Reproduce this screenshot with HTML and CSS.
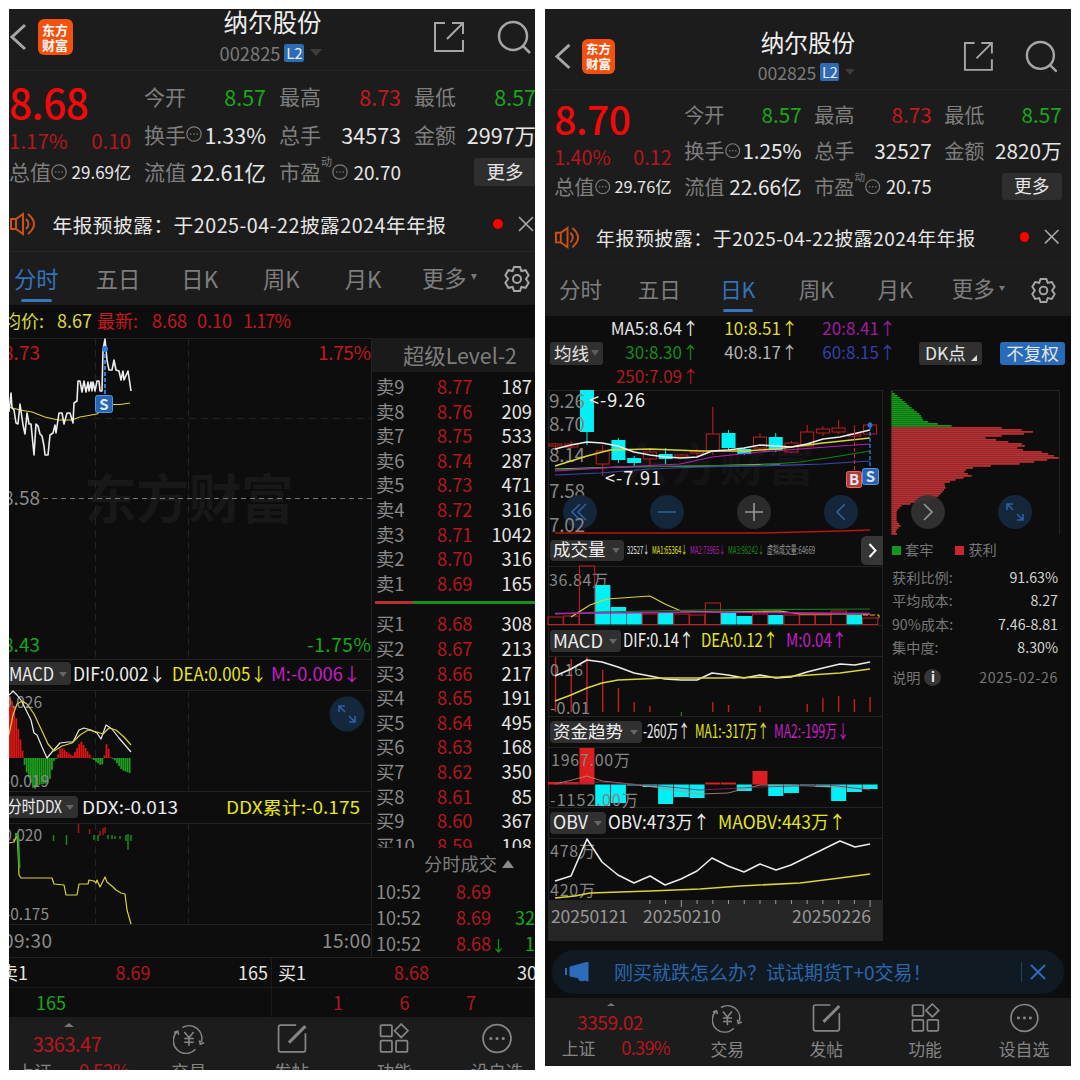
FILE: index.html
```html
<!DOCTYPE html>
<html lang="zh-CN">
  <head>
    <meta charset="UTF-8" />
    <meta name="viewport" content="width=device-width, initial-scale=1.0" />
    <title>纳尔股份 002825</title>
    <link rel="stylesheet" href="styles.css">
  </head>

  <body>
    <!-- 公共图标 -->
    <svg class="defs" width="0" height="0">
      <symbol id="i-back" viewBox="0 0 18 30"><path d="M16 3 3 15l13 12" /></symbol>
      <symbol id="i-share" viewBox="0 0 32 32"><path d="M12 2H2v28h28V19M19 2h11v11M30 2 14 18" /></symbol>
      <symbol id="i-search" viewBox="0 0 34 34"><circle cx="16" cy="16" r="14" /><path d="m26 26 7 7" /></symbol>
      <symbol id="i-horn" viewBox="0 0 26 24"><path d="M1 7h5l7-5v20l-7-5H1zM6 7v10M16 7q5 5 0 10M18 2q12 10 0 20" /></symbol>
      <symbol id="i-close" viewBox="0 0 16 16"><path d="m1 1 14 14M15 1 1 15" /></symbol>
      <symbol id="i-gear" viewBox="0 0 28 28"><path d="M11 2h6l1.400 4 4.200-.8 3 5L23 14l2.600 3.800-3 5-4.200-.8L17 26h-6l-1.400-4-4.200.8-3-5L5 14l-2.600-3.800 3-5 4.200.8z" /><circle cx="14" cy="14" r="4" /></symbol>
      <symbol id="i-trade" viewBox="0 0 34 32"><path d="M10 4.500A13.500 13.500 0 0 1 30 20M24 27.500A13.500 13.500 0 0 1 4 9M1 9.500l4-1.500 1 4M33 20.500l-4 1.500-1-4M12 9l5 6 5-6M17 15v9M12 16h10M12 20h10" /></symbol>
      <symbol id="i-post" viewBox="0 0 30 30"><path d="M19 2H4q-2 0-2 2v22q0 2 2 2h22q2 0 2-2V10" /><path class="pen" d="M12 19 28 3" /></symbol>
      <symbol id="i-func" viewBox="0 0 30 30"><rect x="2" y="2" width="11" height="11" rx="1" /><path d="m22 1 6.500 6.500L22 14l-6.500-6.500z" /><rect x="2" y="17" width="11" height="11" rx="1" /><rect x="17" y="17" width="11" height="11" rx="1" /></symbol>
      <symbol id="i-dots" viewBox="0 0 30 30"><circle cx="15" cy="15" r="13.500" /><path class="dots" d="M9 15h.1M15 15h.1M21 15h.1" /></symbol>
      <symbol id="i-expand" viewBox="-18 -18 36 36"><path d="M-8-2v-6h6M-8-8l6 6M8 2v6H2M8 8 2 2" /></symbol>
    </svg>

    <div class="phone phone-left">
      <div class="top">
        <header class="header">
          <div class="header-side">
            <svg class="icon back"><use href="#i-back" /></svg>
            <div class="logo">东方<br />财富</div>
          </div>
          <div class="title">
            <h1>纳尔股份</h1>
            <p>002825<b>L2</b><i class="tri"></i></p>
          </div>
          <div class="header-side right">
            <svg class="icon share"><use href="#i-share" /></svg>
            <svg class="icon search"><use href="#i-search" /></svg>
          </div>
        </header>
        <section class="quote">
          <div class="price">8.68</div>
          <div><label>今开</label><span class="green">8.57</span></div>
          <div><label>最高</label><span class="red">8.73</span></div>
          <div><label>最低</label><span class="green">8.57</span></div>
          <div class="change"><span>1.17%</span><span>0.10</span></div>
          <div><label>换手<svg class="tip"><use href="#i-dots" /></svg></label><span>1.33%</span></div>
          <div><label>总手</label><span>34573</span></div>
          <div><label>金额</label><span>2997万</span></div>
          <div><label>总值<svg class="tip"><use href="#i-dots" /></svg></label><span class="sm">29.69亿</span></div>
          <div><label>流值</label><span>22.61亿</span></div>
          <div><label>市盈<sup>动</sup><svg class="tip"><use href="#i-dots" /></svg></label><span class="md">20.70</span></div>
          <div class="end"><span class="more">更多</span></div>
        </section>
        <section class="notice">
          <svg class="icon horn"><use href="#i-horn" /></svg>
          <p>年报预披露：于2025-04-22披露2024年年报</p>
          <i class="dot"></i>
          <svg class="icon close"><use href="#i-close" /></svg>
        </section>
        <nav class="tabs">
          <span class="active">分时</span><span>五日</span><span>日K</span><span>周K</span><span>月K</span>
          <span class="tab-more">更多<i class="tri"></i></span>
          <svg class="icon gear"><use href="#i-gear" /></svg>
        </nav>
      </div>

      <div class="minute">
        <svg class="chart" width="363" height="653" viewBox="9 305 363 653">
          <text class="mark" x="84" y="519" font-size="53" textLength="210">东方财富</text>
          <g class="line-grid">
            <path d="M9 338.500h363M9 659.500h363M9 690.500h363M9 791.500h363M9 823.500h363M9 924.500h363M9 957.500h363M371.500 338v620" />
            <path class="dash" d="M95.500 338v321M188.500 338v321M95.500 690v101M188.500 690v101M95.500 823v101M188.500 823v101M9 418.500h363" />
          </g>
          <path class="mid" d="M43 498.500h329" />
          <g font-size="18" fill="#d9d94c">
            <text x="3" y="328">均价:</text>
            <text x="57" y="328" textLength="35">8.67</text>
          </g>
          <g font-size="18" fill="#c3181d">
            <text x="97" y="328">最新:</text>
            <text x="152" y="328" textLength="35">8.68</text>
            <text x="197" y="328" textLength="35">0.10</text>
            <text x="243" y="328" textLength="48">1.17%</text>
          </g>
          <g font-size="19" text-anchor="end">
            <text x="40" y="360" class="red">8.73</text>
            <text x="371" y="360" class="red" textLength="53">1.75%</text>
            <text x="40" y="505" fill="#8c8c8c">8.58</text>
            <text x="40" y="652" class="green">8.43</text>
            <text x="371" y="652" class="green" textLength="64">-1.75%</text>
            <text x="52" y="948" fill="#8c8c8c" textLength="49">09:30</text>
            <text x="371" y="948" fill="#8c8c8c" textLength="49">15:00</text>
          </g>
          <polyline class="l yellow" points="9,407 20,410 32,412 45,417 58,420 72,420 80,417 97,414 104,407 111,404.500 120,404.500 130,403" />
          <polyline class="l white w15" points="9,412 11,393 12,408 14,410 16,423 18,424 20,404 23,425 25,434 27,413 29,424 31,424 34,455 36,424 38,426 40,434 42,436 44,446 45,455 48,455 50,435 53,433 55,425 56,433 59,413 62,413 64,424 67,413 70,413 73,423 74,403 77,401 78,381 80,381 82,392 84,381 86,392 88,382 89,391 91,382 92,391 93,382 95,391 97,381 99,381 100,391 102,391 103,350 105,339 107,360 109,370 112,370 114,360 116,370 119,371 121,380 123,371 124,380 128,371 131,391" />
          <path d="M105 348v48" stroke="#2f7be0" stroke-width="2" stroke-dasharray="4 2" />
          <circle cx="105" cy="349" r="3" fill="#2f7be0" />
          <rect class="tag-s" x="95.500" y="395.500" width="17" height="17" rx="2" />
          <text x="104" y="410" class="tag">S</text>

          <!-- MACD -->
          <rect class="chip" x="0" y="662" width="71" height="23" rx="4" />
          <path class="arrow" d="M59 672h8l-4 5z" />
          <g font-size="18">
            <text x="9" y="681" fill="#eee" textLength="45" lengthAdjust="spacingAndGlyphs">MACD</text>
            <text x="73" y="681" fill="#eee" textLength="93" lengthAdjust="spacingAndGlyphs">DIF:0.002↓</text>
            <text x="172" y="681" fill="#e6e61e" textLength="95" lengthAdjust="spacingAndGlyphs">DEA:0.005↓</text>
            <text x="271" y="681" fill="#c81ec8" textLength="90" lengthAdjust="spacingAndGlyphs">M:-0.006↓</text>
          </g>
          <g id="minute-macd"></g>
          <g font-size="15.500" fill="#8c8c8c" text-anchor="end">
            <text x="42" y="708">0.026</text>
            <text x="49" y="787">-0.019</text>
            <text x="42" y="841">0.020</text>
            <text x="49" y="920">-0.175</text>
          </g>
          <polyline class="l white" points="9,695 13,691 17,695 21,700 27,712 31,720 34,733 37,735 42,747 47,758 52,752 60,743 68,742 73,742 79,730 84,728 91,730 97,733 101,739 106,725 112,729 119,738 125,745 131,752" />
          <polyline class="l yellow" points="9,735 13,715 17,704 22,701 27,704 34,714 42,731 48,744 54,751 62,746 72,743 80,735 88,730 97,732 103,734 109,728 116,730 124,737 131,745" />
          <circle cx="347" cy="714" r="17.500" fill="#14273c" />
          <use class="blue-ico" href="#i-expand" x="329" y="696" width="36" height="36" />

          <!-- DDX -->
          <rect class="chip" x="0" y="796" width="78" height="22" rx="4" />
          <path class="arrow" d="M66 805h8l-4 5z" />
          <g font-size="17.500">
            <text x="8" y="813" fill="#eee" textLength="54" lengthAdjust="spacingAndGlyphs">分时DDX</text>
            <text x="82" y="814" fill="#eee" textLength="96" lengthAdjust="spacingAndGlyphs">DDX:-0.013</text>
            <text x="226" y="814" fill="#e6e61e" textLength="134" lengthAdjust="spacingAndGlyphs">DDX累计:-0.175</text>
          </g>
          <polyline class="l yellow" points="9,843 14,842 17,835 18,850 19,875 21,878 52,878 54,884 64,885 66,895 77,895 79,884 88,884 89,880 94,881 96,883 97,880 100,887 102,883 105,877 107,882 113,887 116,890 121,893 125,894 127,910 129,917 131,924" />
          <path d="M16 833v4M18 834l1.500 34" stroke="#2ba02b" stroke-width="2" fill="none" />
          <path d="M53.500 835v6M66.500 835v10M94 835v5M98 835v6M108 835v4M112 835v4M115 836v3M120 836v3M126 835v6M128 834v16M131 835v6" stroke="#1c8c1c" stroke-width="1.500" />
          <path d="M78.500 824v9M89.500 829v5M100 831v5M103 828v7M105 827v6" stroke="#a01818" stroke-width="1.500" />
        </svg>

        <aside class="book">
          <h2>超级Level-2</h2>
          <div class="asks" id="asks"></div>
          <div class="ratio"></div>
          <div class="bids" id="bids"></div>
          <div class="deals-title">分时成交<i></i></div>
          <div class="deal"><span>10:52</span><em>8.69</em></div>
          <div class="deal"><span>10:52</span><em>8.69</em><b>32</b></div>
          <div class="deal"><span>10:52</span><em>8.68<u>↓</u></em><b>1</b></div>
        </aside>
      </div>

      <div class="best">
        <div><span class="cut">卖1</span><em>8.69</em><span>165</span></div>
        <div><span>买1</span><em>8.68</em><span class="clip">308</span></div>
        <div class="queue sell"><span>165</span></div>
        <div class="queue buy"><span>1</span><span>6</span><span>7</span></div>
      </div>

      <footer class="bottom">
        <div class="index"><i></i><b>3363.47</b><p>上证<span>0.52%</span></p></div>
        <div><svg class="icon"><use href="#i-trade" /></svg>交易</div>
        <div><svg class="icon"><use href="#i-post" /></svg>发帖</div>
        <div><svg class="icon"><use href="#i-func" /></svg>功能</div>
        <div><svg class="icon"><use href="#i-dots" /></svg>设自选</div>
      </footer>
    </div>

    <div class="phone phone-right">
      <div class="top">
        <header class="header">
          <div class="header-side">
            <svg class="icon back"><use href="#i-back" /></svg>
            <div class="logo">东方<br />财富</div>
          </div>
          <div class="title">
            <h1>纳尔股份</h1>
            <p>002825<b>L2</b><i class="tri"></i></p>
          </div>
          <div class="header-side right">
            <svg class="icon share"><use href="#i-share" /></svg>
            <svg class="icon search"><use href="#i-search" /></svg>
          </div>
        </header>
        <section class="quote">
          <div class="price">8.70</div>
          <div><label>今开</label><span class="green">8.57</span></div>
          <div><label>最高</label><span class="red">8.73</span></div>
          <div><label>最低</label><span class="green">8.57</span></div>
          <div class="change"><span>1.40%</span><span>0.12</span></div>
          <div><label>换手<svg class="tip"><use href="#i-dots" /></svg></label><span>1.25%</span></div>
          <div><label>总手</label><span>32527</span></div>
          <div><label>金额</label><span>2820万</span></div>
          <div><label>总值<svg class="tip"><use href="#i-dots" /></svg></label><span class="sm">29.76亿</span></div>
          <div><label>流值</label><span>22.66亿</span></div>
          <div><label>市盈<sup>动</sup><svg class="tip"><use href="#i-dots" /></svg></label><span class="md">20.75</span></div>
          <div class="end"><span class="more">更多</span></div>
        </section>
        <section class="notice">
          <svg class="icon horn"><use href="#i-horn" /></svg>
          <p>年报预披露：于2025-04-22披露2024年年报</p>
          <i class="dot"></i>
          <svg class="icon close"><use href="#i-close" /></svg>
        </section>
        <nav class="tabs">
          <span>分时</span><span>五日</span><span class="active">日K</span><span>周K</span><span>月K</span>
          <span class="tab-more">更多<i class="tri"></i></span>
          <svg class="icon gear"><use href="#i-gear" /></svg>
        </nav>
      </div>

      <div class="ma">
        <span class="btn ma-type">均线<i class="tri"></i></span>
        <div class="ma-values">
          <span class="c5">MA5:8.64↑</span><span class="c10">10:8.51↑</span><span class="c20">20:8.41↑</span>
          <span class="c30">30:8.30↑</span><span class="c40">40:8.17↑</span><span class="c60">60:8.15↑</span>
          <span class="c250">250:7.09↑</span>
        </div>
        <span class="btn dk">DK点<i></i></span>
        <span class="btn fq">不复权</span>
      </div>

      <div class="daily">
        <svg class="chart" width="339" height="552" viewBox="545 390 339 552">
          <text class="mark mark-dark" x="622" y="481" font-size="46" textLength="192">东方财富</text>
          <path class="line-grid" d="M548 390.500h334M548 566.500h334M548 625.500h334M548 656.500h334M548 716.500h334M548 747.500h334M548 807.500h334M548 838.500h334M548.500 390v550M882.500 390v550" />

          <g id="candles"></g>
          <g font-size="19" fill="#858585">
            <text x="549" y="408" textLength="36">9.26</text>
            <text x="549" y="431" textLength="36">8.70</text>
            <text x="549" y="462" textLength="36">8.14</text>
            <text x="549" y="498" textLength="36">7.58</text>
          </g>
          <polyline class="l blue" points="555,475 600,473 650,469 700,467 760,466 823,464 870,461" />
          <polyline class="l silver" points="555,469 620,467 700,466 780,464" />
          <polyline class="l lime" points="555,470 620,467 760,465 800,462 840,456 870,451" />
          <polyline class="l pink" points="555,471 620,467 680,464 712,457 760,452 800,449 840,446 870,444" />
          <polyline class="l yellow w15" points="555,466 571,461 587,456 610,450 650,449 700,451 744,451 776,449 823,443 870,438" />
          <polyline class="l white w15" points="555,449 571,445 587,442 602,443 618,446 634,452 650,455 666,457 681,458 697,457 712,451 728,450 744,448 760,445 776,446 791,447 807,444 823,439 840,437 870,430" />
          <polyline class="l crimson" points="555,533 760,533 840,531 870,530" />
          <g font-size="18" fill="#f0f0f0">
            <text x="589" y="407" textLength="56">&lt;-9.26</text>
            <text x="605" y="485" textLength="56">&lt;-7.91</text>
          </g>
          <path d="M854.500 430v40" stroke="#c33" stroke-dasharray="4 2" />
          <path d="M870 426v42" stroke="#2f6fd8" stroke-dasharray="4 2" stroke-width="1.500" />
          <circle cx="870" cy="425" r="2.500" fill="#2f6fd8" />
          <rect class="tag-b" x="846.500" y="471.500" width="15" height="16" rx="2" />
          <text x="854" y="485" class="tag">B</text>
          <rect class="tag-s" x="862.500" y="468.500" width="16" height="16" rx="2" />
          <text x="870.500" y="482" class="tag">S</text>
          <g fill="#14263a"><circle cx="580" cy="512" r="17" /><circle cx="667" cy="512" r="17" /><circle cx="841" cy="512" r="17" /></g>
          <circle cx="754" cy="512" r="17" fill="#2b2b2b" />
          <path class="blue-ico" d="m580 504-8 8 8 8M586 504l-8 8 8 8M658 512h18M845 504l-8 8 8 8" />
          <path class="gray-ico" d="M745 512h18M754 503v18" />
          <text x="549" y="532" font-size="19" fill="#858585" textLength="36">7.02</text>

          <!-- 成交量 -->
          <rect class="chip" x="550" y="540" width="74" height="21" rx="4" />
          <path class="arrow" d="M612 548h8l-4 5z" />
          <text x="553" y="556" font-size="17.500" fill="#eee">成交量</text>
          <g font-size="11">
            <text x="627" y="554" fill="#eee" textLength="22" lengthAdjust="spacingAndGlyphs">32527↓</text>
            <text x="652" y="554" fill="#e6e61e" textLength="35" lengthAdjust="spacingAndGlyphs">MA1:65364↓</text>
            <text x="690" y="554" fill="#b41eb4" textLength="35" lengthAdjust="spacingAndGlyphs">MA2:73965↓</text>
            <text x="728" y="554" fill="#1c8c1c" textLength="36" lengthAdjust="spacingAndGlyphs">MA3:98242↓</text>
            <text x="767" y="554" fill="#999" textLength="48" lengthAdjust="spacingAndGlyphs">虚拟成交量:64669</text>
          </g>
          <path d="M883 536h-16q-6 0-6 6v17q0 6 6 6h16z" fill="#363636" />
          <path d="m869.500 544 6 6.500-6 6.500" stroke="#fff" stroke-width="2" fill="none" />
          <text x="549" y="586" font-size="16" fill="#858585" textLength="59">36.84万</text>
          <g id="volume"></g>
          <polyline class="l yellow" points="571,617 590,605 607,599 650,596 665,604 681,611 720,612 780,611 800,614 870,614" />
          <polyline class="l lime" points="555,614 600,612 700,610 870,609" />
          <polyline class="l pink w15" points="555,613.500 700,612 870,613.500" />

          <!-- MACD -->
          <rect class="chip" x="550" y="630" width="71" height="22" rx="4" />
          <path class="arrow" d="M609 639h8l-4 5z" />
          <g font-size="18">
            <text x="553" y="648" fill="#eee" textLength="50" lengthAdjust="spacingAndGlyphs">MACD</text>
            <text x="623" y="647" fill="#eee" textLength="71" lengthAdjust="spacingAndGlyphs">DIF:0.14↑</text>
            <text x="701" y="647" fill="#e6e61e" textLength="77" lengthAdjust="spacingAndGlyphs">DEA:0.12↑</text>
            <text x="786" y="647" fill="#c81ec8" textLength="61" lengthAdjust="spacingAndGlyphs">M:0.04↑</text>
          </g>
          <g id="macd"></g>
          <g font-size="16" fill="#858585">
            <text x="550" y="676" textLength="33">0.16</text>
            <text x="550" y="714" textLength="40">-0.01</text>
          </g>
          <polyline class="l white w15" points="555,676 571,669 587,660 602,662 618,667 634,673 650,676 665,679 681,680 697,680 712,673 728,675 744,678 760,675 776,678 791,677 807,672 823,668 840,664 855,665 870,662" />
          <polyline class="l yellow w15" points="555,701 571,695 587,688 602,683 618,680 665,678 720,678 780,677 840,673 870,669" />

          <!-- 资金趋势 -->
          <rect class="chip" x="550" y="721" width="92" height="22" rx="4" />
          <path class="arrow" d="M630 730h8l-4 5z" />
          <g font-size="18">
            <text x="553" y="738" font-size="17.500" fill="#eee">资金趋势</text>
            <text x="643" y="738" fill="#eee" textLength="47" lengthAdjust="spacingAndGlyphs">-260万↑</text>
            <text x="695" y="738" fill="#e6e61e" textLength="74" lengthAdjust="spacingAndGlyphs">MA1:-317万↑</text>
            <text x="774" y="738" fill="#c81ec8" textLength="75" lengthAdjust="spacingAndGlyphs">MA2:-199万↓</text>
          </g>
          <g id="funds"></g>
          <g font-size="16" fill="#858585">
            <text x="551" y="766" textLength="79">1967.00万</text>
            <text x="550" y="806" textLength="88">-1152.00万</text>
          </g>
          <polyline class="l dim" points="555,784 572,780 587,776 602,781 640,785 680,791 700,794 728,793 760,785 790,785 870,789" />
          <polyline class="l dim2" points="555,784 600,782 660,786 700,790 760,787 830,785 870,790" />

          <!-- OBV -->
          <rect class="chip" x="550" y="812" width="56" height="22" rx="4" />
          <path class="arrow" d="M594 821h8l-4 5z" />
          <g font-size="18">
            <text x="553" y="829" fill="#eee" textLength="35" lengthAdjust="spacingAndGlyphs">OBV</text>
            <text x="608" y="829" fill="#eee" textLength="102" lengthAdjust="spacingAndGlyphs">OBV:473万↑</text>
            <text x="718" y="829" fill="#e6e61e" textLength="128" lengthAdjust="spacingAndGlyphs">MAOBV:443万↑</text>
          </g>
          <g font-size="16" fill="#858585">
            <text x="550" y="857" textLength="45">478万</text>
            <text x="550" y="896" textLength="45">420万</text>
          </g>
          <rect x="548" y="900" width="335" height="41" fill="#262627" />
          <polyline class="l yellow w15" points="555,898 575,896 590,893 650,891 700,889 740,886 800,883 840,878 870,874" />
          <polyline class="l white w15" points="555,881 571,876 587,839 602,862 618,875 634,883 650,876 665,885 681,879 697,871 712,858 728,866 744,872 760,864 776,870 791,865 840,841 855,847 870,844" />
          <path id="ticks" stroke="#999" />
          <g font-size="17.500" fill="#999">
            <text x="551" y="923" textLength="77">20250121</text>
            <text x="643" y="923" textLength="78">20250210</text>
            <text x="792" y="923" textLength="79">20250226</text>
          </g>
        </svg>

        <aside class="chips">
          <svg width="187" height="147" viewBox="884 390 187 147">
            <path class="line-grid" d="M891 390.500h168.500V534" />
            <g id="profile"></g>
            <circle cx="928" cy="512" r="17" fill="#333" fill-opacity=".9" />
            <path class="gray-ico" d="m924 504 8 8-8 8" />
            <circle cx="1015" cy="512" r="17" fill="#14263a" />
            <use class="blue-ico" href="#i-expand" x="997" y="494" width="36" height="36" />
          </svg>
          <p class="legend"><i class="g"></i>套牢<i class="r"></i>获利</p>
          <dl>
            <dt>获利比例:</dt><dd>91.63%</dd>
            <dt>平均成本:</dt><dd>8.27</dd>
            <dt>90%成本:</dt><dd>7.46-8.81</dd>
            <dt>集中度:</dt><dd>8.30%</dd>
          </dl>
          <p class="explain">说明<b>i</b><span>2025-02-26</span></p>
        </aside>
      </div>

      <div class="banner">
        <svg width="24" height="20" viewBox="0 0 24 20"><path d="M1 6v7" stroke-width="2" /><path d="M5 5 23 0v19l-4-1-1 1-4-1v-2l-9-2z" /></svg>
        <p>刚买就跌怎么办？试试期货T+0交易！</p>
        <svg class="icon close"><use href="#i-close" /></svg>
      </div>

      <footer class="bottom">
        <div class="index"><i></i><b>3359.02</b><p>上证<span>0.39%</span></p></div>
        <div><svg class="icon"><use href="#i-trade" /></svg>交易</div>
        <div><svg class="icon"><use href="#i-post" /></svg>发帖</div>
        <div><svg class="icon"><use href="#i-func" /></svg>功能</div>
        <div><svg class="icon"><use href="#i-dots" /></svg>设自选</div>
      </footer>
    </div>

    <script src="script.js"></script>
  </body>
</html>
```

FILE: styles.css
```css
* {
  box-sizing: border-box;
}

body {
  margin: 0;
  padding: 9px;
  height: 1080px;
  display: flex;
  align-items: flex-start;
  gap: 10px;
  background: #fff;
  color: #e6e6e6;
  font-family: "Noto Sans CJK SC", sans-serif;
  overflow: hidden;
}

h1, h2, p, dl, dd {
  margin: 0;
  font-weight: normal;
}

i, em {
  font-style: normal;
}

.defs {
  display: none;
}

.phone {
  width: 526px;
  height: 1061px;
  flex: none;
  display: flex;
  flex-direction: column;
  overflow: hidden;
  background: #0d0d0d;
}

.phone-right {
  height: 1057px;
}

.red { color: #c3181d; fill: #c3181d; }
.green { color: #18a818; fill: #18a818; }

.icon {
  fill: none;
  stroke: #a6a6a6;
  stroke-width: 2;
  flex: none;
}

.tri {
  border: 4px solid transparent;
  border-top: 6px solid #777;
  border-bottom: 0;
}

/* 顶部：标题、行情、公告、周期 */
.top {
  width: 546px;
  height: 318px;
  flex: none;
  background: #1c1c1c;
}

.phone-left .top {
  margin: -22px 0 0 -9.5px;
}

.phone-right .top {
  height: 318.800px;
  zoom: 0.963;
}

.header {
  height: 84px;
  display: flex;
  justify-content: space-between;
  border-bottom: 1px solid #242424;
}

.header-side {
  width: 130px;
  padding: 16px 0 0 9px;
  display: flex;
  align-items: center;
  gap: 11px;
}

.header-side.right {
  gap: 32px;
  justify-content: flex-end;
  padding-right: 14px;
}

.back {
  width: 18px;
  height: 30px;
  stroke-width: 3;
}

.share {
  width: 32px;
  height: 32px;
}

.search {
  width: 34px;
  height: 34px;
  stroke-width: 2.500;
}

.logo {
  width: 35px;
  height: 36px;
  padding-top: 3px;
  border-radius: 6px;
  background: #f4500f;
  color: #fff;
  font-size: 13px;
  font-weight: 700;
  line-height: 15px;
  text-align: center;
}

.title {
  text-align: center;
}

.title h1 {
  margin-top: 17px;
  font-size: 24.500px;
  line-height: 36px;
  color: #eee;
}

.title p {
  height: 25px;
  display: flex;
  align-items: center;
  justify-content: center;
  margin-left: -3px;
  font-size: 18.300px;
  color: #7b7b7b;
}

.title b {
  margin: 0 6px 0 4px;
  width: 20px;
  height: 18px;
  border-radius: 2px;
  background: #2d6bb5;
  color: #eee;
  font-size: 15px;
  font-weight: normal;
  line-height: 18px;
}

.title .tri {
  border-width: 7px 6px 0;
  border-top-color: #3c3c3c;
}

.quote {
  height: 123px;
  padding: 7px 9px 0 9.500px;
  display: grid;
  grid-template-columns: repeat(4, 122px);
  grid-auto-rows: 37.500px;
  column-gap: 13px;
}

.quote div {
  display: flex;
  align-items: center;
  justify-content: space-between;
  font-size: 21.500px;
  line-height: 37px;
  white-space: nowrap;
}

.quote label {
  display: flex;
  align-items: center;
  font-size: 21px;
  color: #7e7e7e;
}

.quote sup {
  align-self: flex-start;
  font-size: 11px;
  line-height: 16px;
}

.quote .price {
  padding-top: 9px;
  font-size: 40.500px;
  font-weight: 500;
  letter-spacing: -0.500px;
  color: #f00a0a;
}

.quote .change {
  padding-top: 12px;
  color: #b4181d;
  font-size: 20.500px;
}

.quote .sm { font-size: 17px; }
.quote .md { font-size: 19px; }

.quote .end {
  justify-content: flex-end;
}

.tip {
  width: 16px;
  height: 16px;
  fill: none;
  stroke: #7e7e7e;
  stroke-width: 2.200;
}

.more {
  width: 62px;
  height: 28px;
  border-radius: 3px;
  background: #2e2e2e;
  font-size: 18.500px;
  line-height: 26px;
  text-align: center;
}

.notice {
  height: 58px;
  padding: 3px 12px 0 10px;
  display: flex;
  align-items: center;
  border-bottom: 1px solid #2a2a2a;
}

.phone-right .notice {
  border-color: #1f1f1f;
}

.notice p {
  flex: 1;
  margin-left: 17px;
  font-size: 19.700px;
  letter-spacing: 0.500px;
  white-space: nowrap;
}

.horn {
  width: 26px;
  height: 24px;
  stroke: #c95316;
}

.dot {
  width: 10px;
  height: 10px;
  margin-right: 15px;
  border-radius: 50%;
  background: #f00;
}

.notice .close {
  width: 16px;
  height: 16px;
  stroke-width: 1.700;
}

.tabs {
  height: 53px;
  margin-left: -4px;
  display: flex;
}

.tabs span {
  width: 81.700px;
  height: 50px;
  display: flex;
  flex-direction: column;
  align-items: center;
  font-size: 22.300px;
  line-height: 52px;
  color: #7e7e7e;
}

.tabs .active {
  color: #3472b9;
}

.tabs .active::after {
  content: "";
  width: 31px;
  height: 3px;
  flex: none;
  margin-top: -5px;
  border-radius: 2px;
  background: #3a76bd;
}

.tabs .tab-more {
  width: 94px;
  padding-left: 18px;
  flex-direction: row;
  gap: 4px;
}

.tab-more .tri {
  border-width: 6px 3.500px 0;
}

.gear {
  width: 28px;
  height: 28px;
  margin: 13px 0 0 5px;
}

/* 图表通用 */
.chart {
  flex: none;
  overflow: hidden;
}

.mark {
  font-weight: 700;
  fill: #181818;
}

.mark-dark {
  fill: #141414;
}

.line-grid {
  fill: none;
  stroke: #232323;
}

.dash {
  stroke-dasharray: 7 5;
}

.mid {
  stroke: #777;
  stroke-dasharray: 5 4;
}

.l {
  fill: none;
  stroke-width: 1.200;
  stroke-linejoin: round;
}

.w15 { stroke-width: 1.600; }
.white { stroke: #ececec; }
.yellow { stroke: #d8d43a; }
.pink { stroke: #b420b4; }
.lime { stroke: #138013; }
.blue { stroke: #3c46b4; }
.silver { stroke: #aaa; }
.crimson { stroke: #b81414; stroke-width: 1.500; }
.dim { stroke: #c08c78; stroke-width: 0.800; }
.dim2 { stroke: #8c285a; stroke-width: 0.800; }

.chip { fill: #303030; }
.arrow { fill: #666; }

.tag {
  font-size: 15px;
  font-weight: 700;
  text-anchor: middle;
  fill: #dce6f5;
}

.tag-s { fill: #2864b4; stroke: #5b93dc; }
.tag-b { fill: #b43c32; stroke: #dc6e64; }

.blue-ico {
  fill: none;
  stroke: #2c62a3;
  stroke-width: 1.600;
}

.gray-ico {
  fill: none;
  stroke: #999;
  stroke-width: 1.600;
}

/* 分时 */
.minute {
  display: flex;
  height: 653px;
}

.book {
  flex: 1;
  padding-top: 33px;
  overflow: hidden;
  border-bottom: 1px solid #232323;
}

.book h2 {
  height: 34px;
  padding-left: 13px;
  background: #1a1a1a;
  font-size: 21.300px;
  line-height: 34px;
  text-align: center;
  color: #7e7e7e;
}

.asks {
  padding-top: 2px;
}

.bids {
  height: 244px;
  padding-top: 7px;
  overflow: hidden;
}

.row {
  height: 24.600px;
  padding: 0 3px 0 4px;
  display: grid;
  grid-template-columns: 61px 40px 1fr;
  font-size: 18.300px;
  line-height: 24.600px;
  color: #8a8a8a;
}

.row em, .deal em, .best em {
  color: #b4181d;
}

.row b {
  font-weight: normal;
  text-align: right;
  color: #e6e6e6;
}

.ratio {
  height: 3px;
  margin: 6px 0 0 3px;
  background: linear-gradient(to right, #b43232 24%, #1e8c1e 24%);
}

.deals-title {
  height: 29px;
  padding-left: 52px;
  font-size: 18.300px;
  line-height: 30px;
  color: #7e7e7e;
}

.deals-title i {
  display: inline-block;
  margin: 0 0 3px 5px;
  border: 6px solid transparent;
  border-top: 0;
  border-bottom: 8px solid #8a8a8a;
}

.deal {
  height: 26px;
  padding-left: 4px;
  display: grid;
  grid-template-columns: 80px 46px 1fr;
  font-size: 18px;
  line-height: 28px;
  color: #8a8a8a;
}

.deal u {
  margin-right: -15px;
  font-size: 15px;
  text-decoration: none;
  color: #18a818;
}

.deal em {
  white-space: nowrap;
}

.deal b {
  font-weight: normal;
  text-align: right;
  color: #18a818;
}

.best {
  height: 60px;
  flex: none;
  display: grid;
  grid-template: 30px 30px / 263px 263px;
  overflow: hidden;
}

.best div {
  display: flex;
  justify-content: space-between;
  padding: 0 3px 0 6px;
  border-bottom: 1px solid #1b1b1b;
  border-right: 1px solid #1b1b1b;
  font-size: 18px;
  line-height: 29px;
}

.best .cut { margin-left: -15px; }
.best .clip { margin-right: -16px; }

.best .queue {
  color: #b4181d;
}

.best .sell {
  padding-left: 27px;
  color: #18a818;
}

.best .buy {
  padding: 0 58px 0 61px;
}

/* 日K */
.ma {
  height: 74px;
  flex: none;
  display: flex;
  align-items: center;
  padding-left: 5px;
}

.btn {
  height: 23px;
  border-radius: 3px;
  background: #303030;
  font-size: 17.500px;
  line-height: 22px;
  text-align: center;
  white-space: nowrap;
}

.ma-type {
  width: 53px;
  display: flex;
  align-items: center;
  padding-left: 4px;
  gap: 2px;
}

.ma-type .tri {
  border-width: 6px 4px 0;
  border-top-color: #5c5c5c;
}

.ma-values {
  height: 74px;
  width: 294px;
  display: grid;
  grid-template-columns: 96px 99px 98px;
  grid-auto-rows: 24px;
  font-size: 17px;
  line-height: 24px;
  text-align: right;
}

.c5 { color: #e6e6e6; }
.c10 { color: #e0dc3c; }
.c20 { color: #a01ea0; }
.c30 { color: #198c19; }
.c40 { color: #b4b4b4; }
.c60 { color: #3441aa; }
.c250 { color: #b01c20; }

.dk {
  width: 63px;
  display: flex;
  margin-left: 22px;
  padding-left: 6px;
}

.dk i {
  align-self: flex-end;
  margin: 0 0 4px 5px;
  border: 3px solid transparent;
  border-right-color: #ddd;
  border-bottom-color: #ddd;
}

.fq {
  width: 65px;
  margin-left: 18px;
  background: #276bb9;
}

.daily {
  display: flex;
  height: 551px;
  flex: none;
}

.chips {
  width: 187px;
  font-size: 14.200px;
  color: #777;
}

.chips svg {
  display: block;
}

.legend {
  height: 29px;
  padding-left: 8px;
  line-height: 24px;
}

.legend i {
  display: inline-block;
  width: 9px;
  height: 9px;
  margin-right: 4px;
}

.legend .g { background: #14961e; }
.legend .r { margin-left: 22px; background: #c8282d; }

.chips dl {
  padding: 0 13px 0 8px;
  display: grid;
  grid-template-columns: 1fr auto;
  grid-auto-rows: 23.300px;
  line-height: 23px;
}

.chips dd {
  color: #d2d2d2;
  text-align: right;
}

.explain {
  display: flex;
  align-items: center;
  margin-top: 5px;
  padding: 0 13px 0 8px;
  line-height: 26px;
}

.explain b {
  width: 17px;
  height: 17px;
  margin-left: 4px;
  border-radius: 50%;
  background: #363636;
  color: #eee;
  font-size: 13px;
  line-height: 16px;
  text-align: center;
}

.explain span {
  margin-left: auto;
  letter-spacing: 0.600px;
}

.banner {
  height: 44px;
  flex: none;
  margin: 9px 7px 4px;
  padding: 0 18px 0 13px;
  display: flex;
  align-items: center;
  border-radius: 22px;
  background: #101a23;
  color: #2d66aa;
  font-size: 19px;
}

.banner svg {
  fill: #2d6cb8;
  stroke: #2d6cb8;
}

.banner p {
  width: 408px;
  margin-left: 25px;
  border-right: 1px solid #26405e;
  line-height: 20px;
  white-space: nowrap;
}

.banner .close {
  width: 16px;
  height: 16px;
  margin-left: auto;
  fill: none;
  overflow: visible;
}

/* 底部导航 */
.bottom {
  width: 552px;
  height: 72px;
  flex: none;
  display: grid;
  grid-template-columns: 138px repeat(4, 102.700px);
  background: #1c1c1c;
  color: #858585;
}

.phone-left .bottom {
  margin-left: -9.500px;
}

.phone-right .bottom {
  zoom: 0.963;
}

.bottom div {
  display: flex;
  flex-direction: column;
  align-items: center;
  padding-top: 5px;
  font-size: 17.500px;
  line-height: 33px;
}

.bottom .icon {
  width: 32px;
  height: 31px;
  stroke: #858585;
  stroke-width: 1.700;
}

.pen {
  stroke-width: 3;
}

.dots {
  stroke-width: 3;
  stroke-linecap: round;
}

.bottom .index {
  line-height: 25px;
}

.index i {
  border: 5px solid transparent;
  border-top: 0;
  border-bottom: 4px solid #777;
}

.index b {
  margin: 4px 0 0 -3px;
  font-size: 20px;
  font-weight: normal;
  line-height: 26px;
  letter-spacing: -0.500px;
  color: #b4181d;
}

.index p {
  margin-left: 9px;
}

.index p span {
  margin-left: 27px;
  font-size: 19px;
  letter-spacing: -0.800px;
  color: #b4181d;
}
```

FILE: script.js
```js
const NS = "http://www.w3.org/2000/svg";
const RED = "#c81e1e";
const CYAN = "#00f0f5";

function draw(id, tag, attrs) {
  const el = document.createElementNS(NS, tag);
  for (const key in attrs) el.setAttribute(key, attrs[key]);
  document.getElementById(id).appendChild(el);
}

// x: 左边, a/b: 上下边界
function bar(id, x, a, b, w, fill, stroke) {
  draw(id, "rect", {
    x: x,
    y: Math.min(a, b),
    width: w,
    height: Math.max(Math.abs(b - a), 1),
    fill: fill,
    stroke: stroke || "none",
  });
}

const xAt = (i) => 555.5 + i * 15.73;

// 盘口
const asks = [187, 209, 533, 287, 471, 316, 1042, 316, 165];
const bids = [308, 213, 217, 191, 495, 168, 350, 85, 367, 108];

function row(id, name, price, count) {
  document.getElementById(id).insertAdjacentHTML(
    "beforeend",
    `<div class="row"><span>${name}</span><em>${price}</em><b>${count}</b></div>`
  );
}
asks.forEach((n, i) => row("asks", "卖" + (9 - i), (8.77 - i / 100).toFixed(2), n));
bids.forEach((n, i) => row("bids", "买" + (i + 1), (8.68 - i / 100).toFixed(2), n));

// 按关键点插值
function lerp(points, v) {
  for (let i = 1; i < points.length; i++) {
    const [x0, y0] = points[i - 1];
    const [x1, y1] = points[i];
    if (v <= x1) return y0 + ((y1 - y0) * (v - x0)) / (x1 - x0);
  }
  return points[points.length - 1][1];
}

// 分时 MACD 柱
const minuteMacd = [
  [9, -62], [13, -52], [16, -36], [20, -16], [23, 0], [24, 10], [29, 22], [33, 32],
  [38, 27], [48, 25], [53, 3], [56, 0], [60, -11], [66, -6], [72, -2], [80, -17],
  [91, 0], [94, 3], [101, 8], [103, 0], [106, -16], [110, 0], [113, 1], [121, 12], [131, 16],
];
for (let x = 9; x <= 130; x += 2.1) {
  const h = lerp(minuteMacd, x);
  bar("minute-macd", x, 758, 758 + h, 1.8, h < 0 ? "#e01414" : "#1ea01e");
}

// 日K: [实体上, 实体下, 最高, 最低, 阴线]
const candles = [
  [444, 446, 443, 448], [444, 447, 441, 448], [389, 432, 389, 445, 1], [451, 464, 445, 476],
  [440, 460, 438, 463, 1], [458, 463, 456, 467, 1], [452, 459, 450, 466], [454, 459, 448, 464, 1],
  [455, 457, 454, 459], [451, 453, 449, 456], [434, 451, 407, 455], [433, 448, 430, 450, 1],
  [449, 454, 448, 455, 1], [437, 448, 433, 449], [437, 450, 433, 452, 1], [443, 452, 441, 453],
  [432, 446, 425, 447], [429, 433, 426, 436], [428, 432, 420, 434], [434, 436, 425, 438],
  [425, 434, 422, 435],
];
candles.forEach(([top, bottom, high, low, down], i) => {
  const x = xAt(i);
  bar("candles", x - 0.5, high, low, 1, down ? CYAN : RED);
  if (down) bar("candles", x - 7, top, bottom, 14, CYAN);
  else bar("candles", x - 6.5, top, bottom, 13, "#0d0d0d", RED);
});

// 成交量
const downDays = [3, 4, 5, 7, 11, 12, 14, 19];
const volume = [617, 616, 566, 585, 607, 613, 614, 613, 614, 615, 603, 613, 616, 614, 615, 615, 615, 615, 611, 615, 618];
volume.forEach((top, i) => {
  const x = xAt(i) - 7.5;
  if (downDays.includes(i)) bar("volume", x, top, 624.5, 15.2, CYAN);
  else bar("volume", x, top, 624.5, 15.2, "none", RED);
});
draw("volume", "path", { d: "M863 615h16v5", stroke: "#e0b41e", fill: "none", "stroke-dasharray": "5 2" });

// MACD
const macd = [657, 659, 657, 670, 688, 702, 706, 0, 0, 0, 702, 705, 0, 706, 0, 0, 704, 698, 696, 699, 697];
macd.forEach((top, i) => {
  if (top) bar("macd", xAt(i) - 0.7, top, 712, 1.4, RED);
});
bar("macd", xAt(8) - 0.5, 712, 716, 1, "#1ea01e");

// 资金趋势
const funds = [782, 782, 748, 806, 803, 785.5, 787, 804, 797, 798, 782.5, 782.5, 791, 771, 796, 793, 784.5, 787, 801, 792, 789];
funds.forEach((v, i) => bar("funds", xAt(i) - 7.5, v, 784.5, 15, v < 784 ? "#dc1e1e" : CYAN));

// 时间刻度
let ticks = "";
for (let i = 6; i <= 20; i++) ticks += `M${xAt(i)} 900v${i === 8 || i === 20 ? 7 : 4}`;
document.getElementById("ticks").setAttribute("d", ticks);

// 筹码分布
const profile = [
  [391, 1], [400, 12], [407, 20], [414, 29], [420, 32], [423, 46], [425, 60], [427, 110], [429, 130],
  [432, 147], [434, 118], [437, 94], [440, 110], [444, 137], [448, 122], [451, 150], [454, 160],
  [457, 167], [460, 150], [463, 128], [466, 85], [470, 71], [475, 80], [479, 64], [483, 53],
  [487, 54], [492, 50], [498, 44], [501, 28], [505, 10], [510, 5], [520, 5], [525, 9], [530, 4], [534, 6],
];
for (let y = 391; y < 534; y += 2) {
  const w = lerp(profile, y);
  const up = y < 426;
  bar("profile", 891.5, y, y + 2, w, up ? "#126e16" : "#86282a");
  bar("profile", 891.5, y, y + 1.2, w, up ? "#149619" : "#ba3033");
}
```
